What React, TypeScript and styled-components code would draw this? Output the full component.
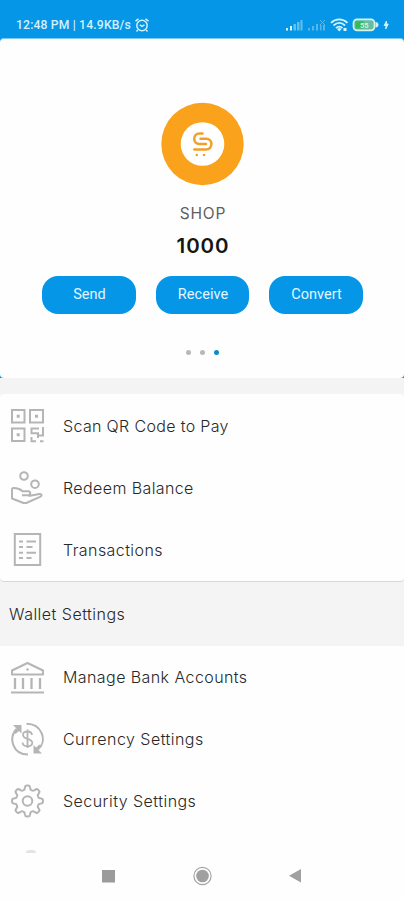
import React from "react";
import styled, { createGlobalStyle } from "styled-components";

const BLUE = "#0596e8";
const GREY = "#b5b5b5";

const GlobalStyle = createGlobalStyle`
  * { box-sizing: border-box; }
  body { margin: 0; background: #fdfdfd; }
`;

const Screen = styled.div`
  width: 404px;
  height: 900px;
  display: flex;
  flex-direction: column;
  overflow: hidden;
  background: #f4f4f4;
  font-family: Inter, "Liberation Sans", sans-serif;
`;

const StatusBar = styled.header`
  height: 38px;
  flex: none;
  display: flex;
  align-items: center;
  padding: 11px 14px 0 16px;
  background: ${BLUE};
  color: #d3f1fa;
`;

const Clock = styled.span`
  width: 118px;
  font: 500 12.2px/14px Roboto, sans-serif;
  letter-spacing: 0.15px;
  white-space: nowrap;
`;

const StatusIcons = styled.div`
  display: flex;
  align-items: center;
  margin-left: auto;
`;

const HeroBack = styled.section`
  flex: none;
  background: ${BLUE};
`;

const Hero = styled.div`
  height: 340px;
  display: flex;
  flex-direction: column;
  align-items: center;
  padding-top: 63px;
  border-top: 1px solid #7cc9f2;
  border-radius: 4px;
  background: #fefefe;
`;

const CoinName = styled.div`
  margin-top: 18px;
  padding-left: 2px;
  font-size: 15.5px;
  line-height: 20px;
  letter-spacing: 0.8px;
  color: #606060;
`;

const Amount = styled.div`
  margin-top: 10px;
  padding-left: 2px;
  font-size: 20.5px;
  line-height: 24px;
  font-weight: 600;
  letter-spacing: 0.9px;
  color: #151515;
`;

const Actions = styled.div`
  display: flex;
  gap: 20px;
  margin-top: 18px;
  padding-left: 1px;
`;

const ActionButton = styled.button`
  width: 93.5px;
  height: 38px;
  padding: 0 0 0 1px;
  border: 0;
  border-radius: 16px;
  background: ${BLUE};
  color: #e2f6ff;
  font: 400 14.5px/18px Roboto, sans-serif;
  letter-spacing: 0.05px;
`;

const Pager = styled.div`
  display: flex;
  gap: 9px;
  margin-top: 36px;
`;

const Dot = styled.i<{ $active?: boolean }>`
  width: 5px;
  height: 5px;
  border-radius: 50%;
  background: ${(p) => (p.$active ? "#0a8cc8" : "#b9b9b9")};
`;

const Menu = styled.nav<{ $card?: boolean }>`
  flex: none;
  margin-top: ${(p) => (p.$card ? "16px" : "0")};
  border-radius: ${(p) => (p.$card ? "4px" : "0")};
  border-bottom: ${(p) => (p.$card ? "1px solid #d8d8d8" : "0")};
  padding-top: ${(p) => (p.$card ? "1px" : "0")};
  background: #fefefe;
`;

const Row = styled.div`
  height: 62px;
  display: flex;
  align-items: center;
  padding-left: 9px;
`;

const IconSlot = styled.span`
  width: 54px;
  display: flex;
`;

const Label = styled.span<{ $tracking: number }>`
  font-size: 16px;
  line-height: 22px;
  font-weight: 350;
  letter-spacing: ${(p) => p.$tracking}px;
  color: #282828;
  white-space: nowrap;
`;

const SectionTitle = styled.h2`
  flex: none;
  height: 64px;
  margin: 0;
  display: flex;
  align-items: center;
  padding-left: 9px;
  background: #f4f4f4;
`;

const PeekRow = styled.div`
  height: 21px;
  flex: none;
  display: flex;
  align-items: flex-end;
  padding-left: 26px;
  background: #fefefe;
`;

const PeekIcon = styled.i`
  width: 10px;
  height: 3px;
  border-radius: 3px 3px 0 0;
  background: #e4e4e4;
`;

const NavBar = styled.footer`
  flex: 1;
  display: flex;
  align-items: center;
  padding: 0 0 1px 98px;
  gap: 74px;
  background: #fefefe;
`;

const Glyph = ({ children }: { children: React.ReactNode }) => (
  <svg width="36" height="36" viewBox="0 0 36 36" fill="none" stroke={GREY} strokeWidth="2">
    {children}
  </svg>
);

const QrIcon = () => (
  <Glyph>
    <path d="M3 2h12.5v12.5H3zM21 2h13v12.5H21zM3 20.5h12.5V33H3z" />
    <path d="M7.7 6.8h3v3h-3zM26 6.8h3v3h-3zM7.7 25.2h3v3h-3z" fill={GREY} stroke="none" />
    <path d="M30 20.5h-7.5v4.7H29v4.8M34 19v8.5h-5M22.5 29v4.2H27M31 33.2h3.5" />
  </Glyph>
);

const HandIcon = () => (
  <Glyph>
    <circle cx="15" cy="6" r="3.8" />
    <circle cx="26" cy="14.2" r="3.8" />
    <path d="M3 18.2c5-.5 7.5.5 10.5 3H19c3 0 3 4 0 4h-6M3 18.2v10.3L14.5 33h2.8L31 26.8c2.5-1.2 2-3-.5-2.8l-11 2" strokeLinejoin="round" />
  </Glyph>
);

const ListIcon = () => (
  <Glyph>
    <path d="M5.8 2h25.4v31H5.8z" />
    <path d="M10 9.5h4M10 15h4M10 20.7h4M10 26h4M17.5 9.5H27M17.5 15h6M17.5 20.7H27M17.5 26h5" />
  </Glyph>
);

const BankIcon = () => (
  <Glyph>
    <path d="M3 11.5 18.5 4 34 11.5V15.5H3zM2 33.5h33" strokeLinejoin="round" />
    <path d="M6 19v11M14 19v11M22.5 19v11M31 19v11" strokeWidth="2.3" />
    <circle cx="18.5" cy="10.5" r="1.2" fill={GREY} stroke="none" />
  </Glyph>
);

const CurrencyIcon = () => (
  <Glyph>
    <path d="M17.5 2.8c15.5 0 21 17 12 25M19 33.5C4 33.5-1 17.5 7.5 8" />
    <path d="M4 4h8.5v8.5L10 10l-3.5 3-2-2 3-3.5zM33 32.5h-8.5V24l2.5 2.5 3.5-3 2 2-3 3.5z" fill={GREY} stroke="none" />
    <path d="M23 14c-.5-4.6-9-4.6-9-.3 0 5.5 9.3 3 9.3 8.3 0 4.5-9.3 4.5-9.8-.5M18.5 8.5v18.5" strokeWidth="1.8" />
  </Glyph>
);

const teeth = Array.from({ length: 97 }, (_, i) => {
  const angle = (i / 96) * Math.PI * 2;
  const radius = 13.5 + 2 * Math.tanh(2.4 * Math.cos(angle * 8));
  return `${i ? "L" : "M"}${(18.5 + radius * Math.sin(angle)).toFixed(2)} ${(18 - radius * Math.cos(angle)).toFixed(2)}`;
}).join("");

const GearIcon = () => (
  <Glyph>
    <path d={`${teeth}Z`} strokeLinejoin="round" />
    <circle cx="18.5" cy="18" r="4.8" />
  </Glyph>
);

const AlarmIcon = () => (
  <svg width="16" height="16" viewBox="0 0 16 16" fill="none" stroke="currentColor" strokeWidth="1.5">
    <circle cx="8" cy="8.5" r="5.2" />
    <path d="M1.5 4.2 4.5 1.8M14.5 4.2l-3-2.4M3.8 13l-1.3 1.5M12.2 13l1.3 1.5M5.7 7.8 8 9.4l2.5-1.6" />
  </svg>
);

const StatusGlyphs = () => (
  <svg width="106" height="16" viewBox="0 0 106 16" fill="none">
    <path d="M2 11h2v2.5H2zM6 9h2v4.5H6z" fill="#d9f5fb" />
    <path d="M9.5 7h2.5v6.5H9.5zM13 5h2.5v8.5H13zM16.5 3h2v10.5h-2z" fill="#65bfe9" />
    <path d="M24 11h2v2.5h-2zM28 9h2v4.5h-2zM32 7h2v6.5h-2zM36 8h1.5v5.5H36zM39 8h2v5.5h-2z" fill="#58b6e8" />
    <path d="m36 3 5 5m0-5-5 5" stroke="#58b6e8" />
    <g stroke="#d5f3fb" strokeWidth="1.7">
      <path d="M47 5.8c5-4.7 11.5-4.7 16.5 0M49.5 8.5c3.7-3.2 8-3.2 11.5 0M52 11c2-1.8 4.5-1.8 6.5 0" />
    </g>
    <path d="m53 12 2.3-1.3 2.3 1.3-2.3 2.5zM59.5 11h3v3h-3z" fill="#d5f3fb" />
    <rect x="69.5" y="2.3" width="21" height="11" rx="3.5" fill="#65bda6" stroke="#d5f3e8" strokeWidth="1.7" />
    <path d="M71.5 4.2h8v7.2h-8z" fill="#36b958" />
    <path d="M91.5 5c4 0 4 5.6 0 5.6z" fill="#d5f3e8" />
    <text x="76" y="10.6" fontFamily="Roboto, sans-serif" fontSize="7.5" fontWeight="700" fill="#d8f5c0">55</text>
    <path d="M102.5 4 100.2 8.5h2l-.5 3.5 2.5-5h-2z" fill="#d5f3fb" stroke="#d5f3fb" />
  </svg>
);

const Coin = () => (
  <svg width="84" height="84" viewBox="0 0 84 84" fill="none">
    <circle cx="42.5" cy="42" r="41.2" fill="#faa21b" />
    <circle cx="42.5" cy="42" r="21.8" fill="#fff" />
    <g stroke="#f0a02a" strokeWidth="2.5" strokeLinecap="round" strokeLinejoin="round">
      <path d="M42.5 31.5H39.5c-7 0-7 10.5 0 10.5H46" />
      <path d="M40.5 36.7H46c7.2 0 7.2 10.8 0 10.8H34.3" />
    </g>
    <circle cx="36.8" cy="53" r="1.3" fill="#f6a020" />
    <circle cx="44" cy="53" r="1.3" fill="#f6a020" />
  </svg>
);

const primaryItems = [
  { label: "Scan QR Code to Pay", tracking: 0.34, Icon: QrIcon },
  { label: "Redeem Balance", tracking: 0.4, Icon: HandIcon },
  { label: "Transactions", tracking: 0.42, Icon: ListIcon },
];

const settingsItems = [
  { label: "Manage Bank Accounts", tracking: 0.42, Icon: BankIcon },
  { label: "Currency Settings", tracking: 0.46, Icon: CurrencyIcon },
  { label: "Security Settings", tracking: 0.46, Icon: GearIcon },
];

const MenuRows = ({ items }: { items: typeof primaryItems }) => (
  <>
    {items.map(({ label, tracking, Icon }) => (
      <Row key={label}>
        <IconSlot><Icon /></IconSlot>
        <Label $tracking={tracking}>{label}</Label>
      </Row>
    ))}
  </>
);

export default function App() {
  return (
    <>
      <GlobalStyle />
      <Screen>
        <StatusBar>
          <Clock>12:48 PM | 14.9KB/s</Clock>
          <AlarmIcon />
          <StatusIcons><StatusGlyphs /></StatusIcons>
        </StatusBar>
        <HeroBack>
          <Hero>
            <Coin />
            <CoinName>SHOP</CoinName>
            <Amount>1000</Amount>
            <Actions>
              <ActionButton>Send</ActionButton>
              <ActionButton>Receive</ActionButton>
              <ActionButton>Convert</ActionButton>
            </Actions>
            <Pager><Dot /><Dot /><Dot $active /></Pager>
          </Hero>
        </HeroBack>
        <Menu $card><MenuRows items={primaryItems} /></Menu>
        <SectionTitle><Label $tracking={0.48}>Wallet Settings</Label></SectionTitle>
        <Menu><MenuRows items={settingsItems} /></Menu>
        <PeekRow><PeekIcon /></PeekRow>
        <NavBar>
          <svg width="20" height="20" viewBox="0 0 20 20"><path d="M4 4h13v12.5H4z" fill="#9b9b9b" /></svg>
          <svg width="20" height="20" viewBox="0 0 20 20"><circle cx="10.5" cy="10" r="8.6" fill="none" stroke="#a5a5a5" strokeWidth="1.2" /><circle cx="10.5" cy="10" r="6.3" fill="#a0a0a0" /></svg>
          <svg width="20" height="20" viewBox="0 0 20 20"><path d="M15 3v13.5L3 9.8z" fill="#a0a0a0" /></svg>
        </NavBar>
      </Screen>
    </>
  );
}
